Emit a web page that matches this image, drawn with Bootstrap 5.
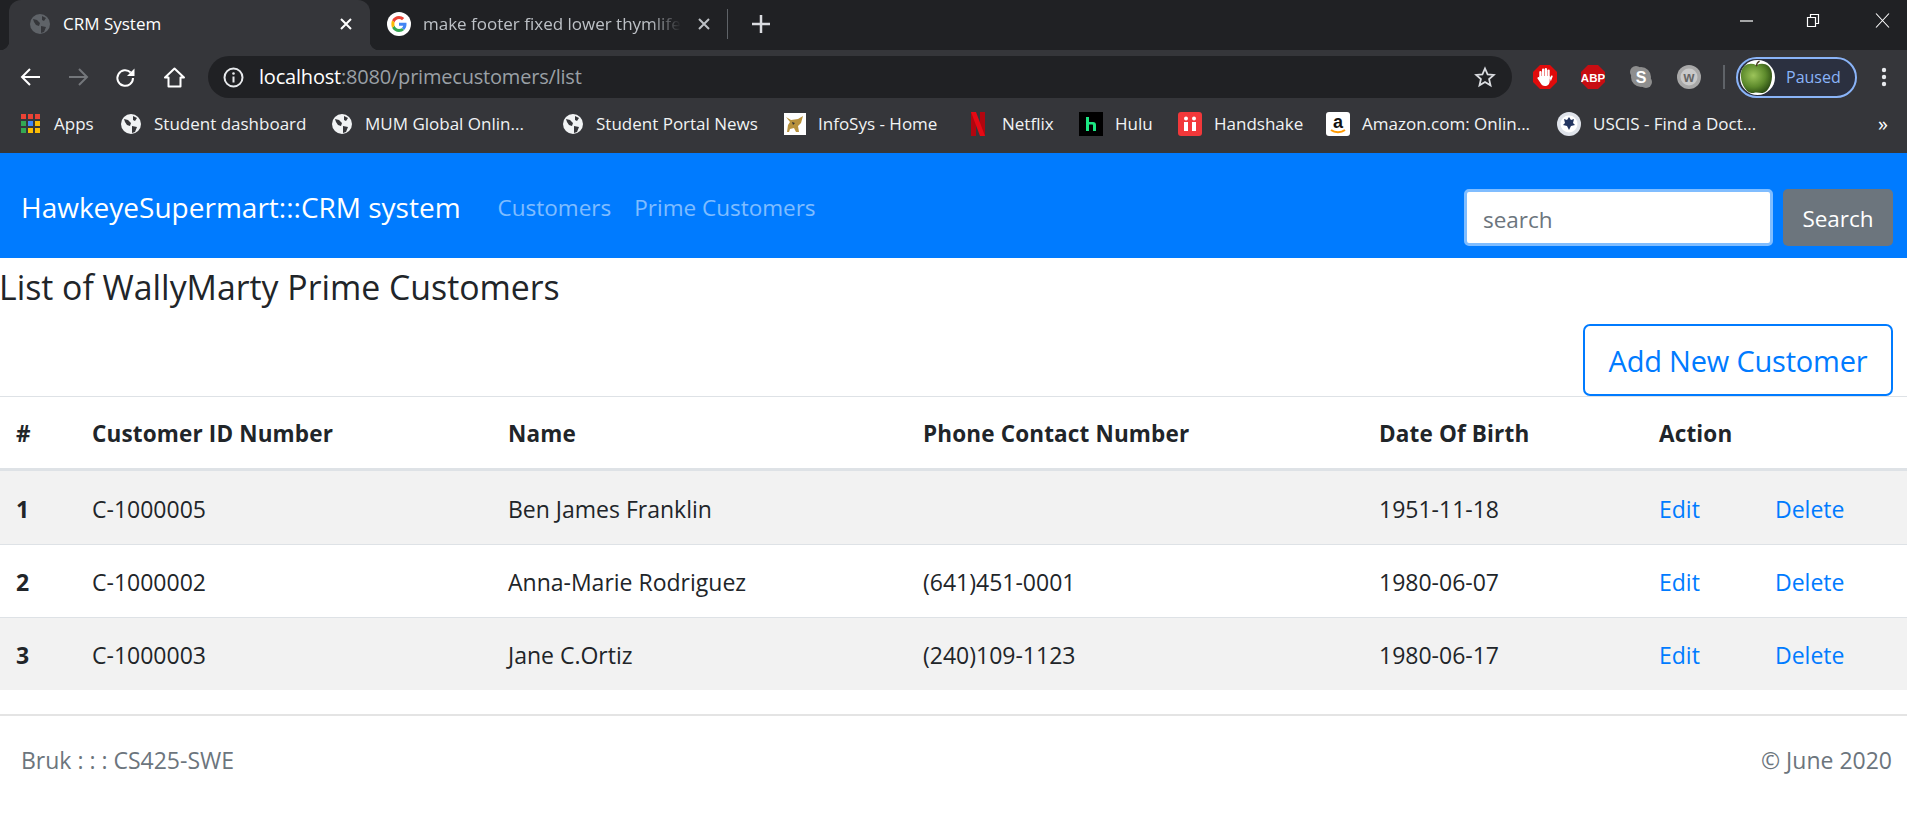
<!DOCTYPE html>
<html lang="en">
<head>
  <meta charset="UTF-8" />
  <title>CRM System</title>
  <link href="https://cdn.jsdelivr.net/npm/bootstrap@5.3.0/dist/css/bootstrap.min.css" rel="stylesheet"/>
  <style>
    html, body { height: 813px; overflow: hidden; }
    body { font-family: "Open Sans", "Liberation Sans", sans-serif; background: #fff; color: #212529; }

    /* browser chrome */
    .chrome { background: #35363a; height: 153px; color: #e8eaed; font-size: 17px; }
    .tabstrip { height: 50px; background: #202124; padding-left: 9px; }
    .tab-item { height: 50px; display: flex; align-items: center; position: relative; padding-bottom: 2px; }
    .tab-on { width: 361px; background: #35363a; border-radius: 12px 12px 0 0; color: #fff; padding-left: 20px; }
    .tab-on::before, .tab-on::after { content: ""; position: absolute; bottom: 0; width: 9px; height: 9px; }
    .tab-on::before { left: -9px; background: radial-gradient(circle at 0 0, #202124 9px, #35363a 9.5px); }
    .tab-on::after { right: -9px; background: radial-gradient(circle at 100% 0, #202124 9px, #35363a 9.5px); }
    .tab-off { width: 357px; color: #bdc1c6; padding-left: 17px; }
    .tab-title { margin-left: 12px; white-space: nowrap; overflow: hidden; width: 270px; }
    .tab-off .tab-title { width: 258px; margin-left: 12px; -webkit-mask-image: linear-gradient(to right, #000 88%, transparent); mask-image: linear-gradient(to right, #000 88%, transparent); }
    .tab-x { margin-left: auto; margin-right: 17px; display: flex; }
    .tab-off .tab-x { margin-right: 16px; }
    .tab-sep { width: 1px; height: 30px; background: #5f6368; }
    .tab-plus { margin-left: 23px; display: flex; }
    .win-ctrl { margin-left: auto; display: grid; grid-template-columns: 67px 69px 32px; align-items: center; justify-items: start; height: 40px; }

    .toolbar { height: 54px; display: grid; grid-template-columns: 48px 47px 49px 44px 1304px 21px 48px 48px 48px 46px 13px 121px 1fr; align-items: center; padding-left: 20px; }
    .omni { background: #202124; height: 42px; border-radius: 21px; display: flex; align-items: center; padding: 0 16px 0 15px; font-size: 20px; color: #9aa0a6; letter-spacing: -0.2px; }
    .omni b { font-weight: 400; color: #fff; }
    .omni-url { margin-left: 15px; }
    .omni-star { margin-left: auto; display: flex; }
    .tool-sep { width: 2px; height: 24px; background: #5f6368; }
    .profile-pill { height: 41px; width: 121px; border: 2px solid #8ab4f8; border-radius: 21px; background: #2b3040; display: flex; align-items: center; padding-left: 2px; color: #8ab4f8; font-size: 16px; }
    .profile-pill span { margin-left: 11px; }
    .tool-dots { margin-left: 24px; display: flex; }

    .bookmarks { height: 49px; display: grid; grid-template-columns: 100px 211px 231px 222px 186px 109px 99px 148px 231px 1fr 18px; align-items: center; padding: 0 11px 9px 20px; }
    .bm-item { display: flex; align-items: center; gap: 12px; white-space: nowrap; color: #f1f3f4; }
    .bm-item svg { flex: none; }
    .bm-netflix { margin-right: 4px; }

    /* page */
    .crm-nav { height: 105px; background: #007bff; padding: 0 14px 0 21px; }
    .crm-brand { font-size: 28px; color: #fff; margin-top: 3px; }
    .crm-link { font-size: 22.5px; color: rgba(255,255,255,.5); text-decoration: none; margin-top: 5px; }
    .crm-links { margin-left: 37px; gap: 23px; }
    .crm-search { gap: 10px; margin-top: 24px; }
    .crm-input { width: 309px; height: 57px; font-size: 22.5px; border: 3px solid #80bdff; border-radius: 5px; padding: 3px 16px 0; }
    .crm-input::placeholder { color: #6c757d; }
    .crm-submit { width: 110px; height: 57px; font-size: 22.5px; background: #6c757d; color: #fff; border: 0; border-radius: 5px; padding: 2px 0 0; }

    .page-title { font-size: 33.8px; font-weight: 400; line-height: 59px; height: 60px; margin: 0 0 0 -1px; }
    .add-row { height: 78px; padding: 6px 14px 0 0; }
    .add-btn { width: 310px; height: 72px; font-size: 29px; color: #007bff; border: 2px solid #007bff; border-radius: 7px; display: flex; align-items: center; justify-content: center; text-decoration: none; letter-spacing: -0.2px; background: #fff; position: relative; padding-top: 1px; }

    .crm-table { width: 1907px; table-layout: fixed; margin: 0; border-collapse: separate; border-spacing: 0; --bs-table-striped-bg: #f2f2f2; --bs-table-border-color: #dee2e6; font-size: 23px; }
    .crm-table th, .crm-table td { padding: 3px 0 0 17px; vertical-align: middle; border: 0; }
    .crm-table th:first-child { padding-left: 16px; }
    .crm-table thead tr { height: 75px; }
    .crm-table thead th { border-top: 1px solid #dee2e6; border-bottom: 3px solid #dee2e6; font-size: 22.5px; letter-spacing: .15px; font-weight: 700; }
    .crm-table tbody tr { height: 73px; }
    .crm-table tbody tr + tr td, .crm-table tbody tr + tr th { border-top: 1px solid #dee2e6; }
    .crm-table a { color: #007bff; text-decoration: none; }
    .col-n { width: 75px; }
    .col-id { width: 416px; }
    .col-name { width: 415px; }
    .col-phone { width: 456px; }
    .col-dob { width: 280px; }
    .col-edit { width: 116px; }

    .crm-foot { margin-top: 24px; border-top: 2px solid #e4e4e4; height: 99px; padding: 0 15px 9px 21px; color: #6c757d; font-size: 23px; }
  </style>
</head>
<body>

  <!-- Browser chrome -->
  <div class="chrome">
    <div class="tabstrip d-flex">
      <div class="tab-item tab-on">
        <svg width="22" height="22" viewBox="0 0 22 22"><circle cx="11" cy="11" r="10" fill="#5f6368"/><path d="M4 6l4 1 3 3-1 3-3-1-2-3zM13 3l4 2-2 3-2-1zM12 13l5 1-2 5-3 1z" fill="#35363a"/></svg>
        <span class="tab-title">CRM System</span>
        <span class="tab-x"><svg width="14" height="14" viewBox="0 0 14 14"><path d="M2 2l10 10M12 2L2 12" stroke="#fff" stroke-width="2"/></svg></span>
      </div>
      <div class="tab-item tab-off">
        <svg width="24" height="24" viewBox="0 0 24 24"><circle cx="12" cy="12" r="12" fill="#fff"/><path d="M19.500 12.300c0-.6 0-1.100-.1-1.600H12v3h4.200c-.2 1-.7 1.800-1.500 2.400l2.400 1.900c1.500-1.300 2.400-3.300 2.400-5.700z" fill="#4285f4"/><path d="M12 20c2.100 0 3.900-.7 5.100-1.900l-2.400-1.900c-.7.500-1.600.8-2.700.8-2.100 0-3.800-1.400-4.400-3.200l-2.500 1.900C6.400 18.300 9 20 12 20z" fill="#34a853"/><path d="M7.600 13.800c-.3-1.100-.3-2.400 0-3.600L5.100 8.300c-1 2.200-1 5.200 0 7.400z" fill="#fbbc05"/><path d="M12 7c1.200 0 2.200.4 3 1.200l2.200-2.200C15.800 4.700 14 4 12 4 9 4 6.400 5.700 5.100 8.300l2.500 1.900C8.200 8.400 9.900 7 12 7z" fill="#ea4335"/></svg>
        <span class="tab-title">make footer fixed lower thymlife</span>
        <span class="tab-x"><svg width="14" height="14" viewBox="0 0 14 14"><path d="M2 2l10 10M12 2L2 12" stroke="#bdc1c6" stroke-width="2"/></svg></span>
      </div>
      <div class="tab-item"><span class="tab-sep"></span></div>
      <div class="tab-item tab-plus"><svg width="20" height="20" viewBox="0 0 20 20"><path d="M10 1v18M1 10h18" stroke="#dadce0" stroke-width="2.500"/></svg></div>
      <div class="win-ctrl">
        <svg width="15" height="15" viewBox="0 0 15 15"><path d="M1 8h13" stroke="#fff" stroke-width="1.200"/></svg>
        <svg width="15" height="15" viewBox="0 0 15 15"><path d="M1.500 4.500h8v9h-8zM4.500 4.500v-3h8v9h-3" fill="none" stroke="#fff" stroke-width="1.200"/></svg>
        <svg width="15" height="15" viewBox="0 0 15 15"><path d="M1 0.500l13 14M14 0.500l-13 14" stroke="#fff" stroke-width="1.100"/></svg>
      </div>
    </div>

    <div class="toolbar">
      <svg width="21" height="20" viewBox="0 0 21 20"><path d="M20 10H2M10 2l-8 8 8 8" fill="none" stroke="#fff" stroke-width="2"/></svg>
      <svg width="21" height="20" viewBox="0 0 21 20"><path d="M1 10h18M11 2l8 8-8 8" fill="none" stroke="#74777b" stroke-width="2"/></svg>
      <svg width="21" height="21" viewBox="0 0 21 21"><path d="M18 11a7.800 7.800 0 1 1-2.300-5.500" fill="none" stroke="#fff" stroke-width="2"/><path d="M19.500 1.500v7.500H12z" fill="#fff"/></svg>
      <svg width="21" height="21" viewBox="0 0 21 21"><path d="M10.500 1.500L1 10.500h3.500v9h12v-9H20z" fill="none" stroke="#fff" stroke-width="2" stroke-linejoin="round"/></svg>
      <div class="omni">
        <svg width="21" height="21" viewBox="0 0 21 21"><circle cx="10.500" cy="10.500" r="9" fill="none" stroke="#e8eaed" stroke-width="2"/><path d="M10.500 9.500v6" stroke="#e8eaed" stroke-width="2"/><circle cx="10.500" cy="6.500" r="1.300" fill="#e8eaed"/></svg>
        <span class="omni-url"><b>localhost</b>:8080/primecustomers/list</span>
        <span class="omni-star"><svg width="22" height="22" viewBox="0 0 22 22"><path d="M11 2.500l2.600 5.800 6.200.6-4.700 4.200 1.400 6.200L11 16l-5.500 3.300 1.400-6.200-4.700-4.200 6.200-.6z" fill="none" stroke="#dadce0" stroke-width="1.800"/></svg></span>
      </div>
      <span></span>
      <svg width="24" height="24" viewBox="0 0 24 24"><path d="M7 0h10l7 7v10l-7 7H7l-7-7V7z" fill="#e00b0b"/><g fill="#fff"><rect x="6.300" y="6" width="2.300" height="9" rx="1.100"/><rect x="9" y="3.500" width="2.300" height="11" rx="1.100"/><rect x="11.700" y="3" width="2.300" height="11" rx="1.100"/><rect x="14.400" y="4.500" width="2.300" height="10" rx="1.100"/><path d="M6.300 11h10.400v5c0 3-2 5-4.700 5-2.300 0-3.500-1.200-4.500-3l-3-4.500c-.6-1 1-2.200 2-1.200l1 1z"/><path d="M16.700 13l1.300-2c.6-.9 2-.2 1.600.8l-1.800 4.700z"/></g></svg>
      <svg width="24" height="24" viewBox="0 0 24 24"><path d="M7 0h10l7 7v10l-7 7H7l-7-7V7z" fill="#c70d12"/><text x="12" y="16.500" text-anchor="middle" font-family="Liberation Sans, sans-serif" font-weight="700" font-size="11.500" fill="#fff">ABP</text></svg>
      <svg width="24" height="24" viewBox="0 0 24 24"><circle cx="7" cy="7" r="6" fill="#8e8e8e"/><circle cx="17" cy="17" r="6" fill="#8e8e8e"/><circle cx="12" cy="12" r="10" fill="#8e8e8e"/><text x="12" y="17.500" text-anchor="middle" font-family="Liberation Sans, sans-serif" font-weight="700" font-size="16" fill="#fff">S</text></svg>
      <svg width="24" height="24" viewBox="0 0 24 24"><circle cx="12" cy="12" r="12" fill="#a8a8a8"/><circle cx="12" cy="12" r="8.500" fill="#c9c9c9"/><text x="12" y="17" text-anchor="middle" font-family="Liberation Sans, sans-serif" font-weight="700" font-size="14" fill="#666">w</text></svg>
      <span class="tool-sep"></span>
      <div class="profile-pill">
        <svg width="35" height="35" viewBox="0 0 34 34"><defs><radialGradient id="apl" cx="40%" cy="40%" r="65%"><stop offset="0" stop-color="#9cc45a"/><stop offset="0.600" stop-color="#5d8a2c"/><stop offset="1" stop-color="#2c4d14"/></radialGradient></defs><circle cx="17" cy="17" r="17" fill="#fff"/><path d="M16 5c6-3 14-1 15 8 .8 8-3 18-9 19-2 .4-4-.5-6-.5s-3 .9-5 .5C5 31 0 21 1 13 2 4 10 2 16 5z" fill="url(#apl)"/><path d="M16 6c0-2 1-4 3-5" stroke="#4a3a20" stroke-width="1.300" fill="none"/></svg>
        <span>Paused</span>
      </div>
      <span class="tool-dots"><svg width="6" height="22" viewBox="0 0 6 22"><circle cx="3" cy="4" r="2.200" fill="#e8eaed"/><circle cx="3" cy="11" r="2.200" fill="#e8eaed"/><circle cx="3" cy="18" r="2.200" fill="#e8eaed"/></svg></span>
    </div>

    <div class="bookmarks">
      <div class="bm-item">
        <svg width="22" height="22" viewBox="0 0 22 22"><g fill="#ea4335"><rect x="1" y="1" width="5" height="5"/><rect x="8" y="1" width="5" height="5"/><rect x="15" y="1" width="5" height="5"/></g><rect x="1" y="8" width="5" height="5" fill="#34a853"/><rect x="8" y="8" width="5" height="5" fill="#4285f4"/><rect x="15" y="8" width="5" height="5" fill="#fbbc05"/><rect x="1" y="15" width="5" height="5" fill="#34a853"/><rect x="8" y="15" width="5" height="5" fill="#fbbc05"/><rect x="15" y="15" width="5" height="5" fill="#fbbc05"/></svg>
        <span>Apps</span>
      </div>
      <div class="bm-item">
        <svg width="22" height="22" viewBox="0 0 22 22"><circle cx="11" cy="11" r="10" fill="#f1f3f4"/><path d="M4 6l4 1 3 3-1 3-3-1-2-3zM13 3l4 2-2 3-2-1zM12 13l5 1-2 5-3 1z" fill="#35363a"/></svg>
        <span>Student dashboard</span>
      </div>
      <div class="bm-item">
        <svg width="22" height="22" viewBox="0 0 22 22"><circle cx="11" cy="11" r="10" fill="#f1f3f4"/><path d="M4 6l4 1 3 3-1 3-3-1-2-3zM13 3l4 2-2 3-2-1zM12 13l5 1-2 5-3 1z" fill="#35363a"/></svg>
        <span>MUM Global Onlin...</span>
      </div>
      <div class="bm-item">
        <svg width="22" height="22" viewBox="0 0 22 22"><circle cx="11" cy="11" r="10" fill="#f1f3f4"/><path d="M4 6l4 1 3 3-1 3-3-1-2-3zM13 3l4 2-2 3-2-1zM12 13l5 1-2 5-3 1z" fill="#35363a"/></svg>
        <span>Student Portal News</span>
      </div>
      <div class="bm-item">
        <svg width="22" height="22" viewBox="0 0 22 22"><rect width="22" height="22" fill="#fff"/><path d="M2 4l5 3 7-1 5-3-2 7-3 3 1 6h-3l-2-4-4 1-1 3H3l1-7 2-3z" fill="#b8923c"/><path d="M8 9l3 1-2 2z" fill="#333"/></svg>
        <span>InfoSys - Home</span>
      </div>
      <div class="bm-item">
        <svg class="bm-netflix" width="16" height="24" viewBox="0 0 16 24"><path d="M1 0h5v24H1z" fill="#b1060f"/><path d="M10 0h5v24h-5z" fill="#b1060f"/><path d="M1 0h5l9 24h-5z" fill="#e50914"/></svg>
        <span>Netflix</span>
      </div>
      <div class="bm-item">
        <svg width="24" height="24" viewBox="0 0 24 24"><rect width="24" height="24" fill="#000"/><path d="M7 5h3v5h4c2 0 3 1 3 3v6h-3v-5.500c0-.6-.4-1-1-1h-3V19H7z" fill="#1ce783"/></svg>
        <span>Hulu</span>
      </div>
      <div class="bm-item">
        <svg width="24" height="24" viewBox="0 0 24 24"><rect width="24" height="24" rx="3" fill="#f2383a"/><rect x="6" y="10" width="4" height="9" fill="#fff"/><rect x="14" y="10" width="4" height="9" fill="#fff"/><circle cx="8" cy="6.500" r="2" fill="#fff"/><circle cx="16" cy="6.500" r="2" fill="#fff"/></svg>
        <span>Handshake</span>
      </div>
      <div class="bm-item">
        <svg width="24" height="24" viewBox="0 0 24 24"><rect width="24" height="24" rx="3" fill="#fff"/><text x="12" y="16" text-anchor="middle" font-family="Liberation Sans, sans-serif" font-weight="700" font-size="18" fill="#111">a</text><path d="M5 18c4 3 10 3 14 0" stroke="#f90" stroke-width="2" fill="none"/></svg>
        <span>Amazon.com: Onlin...</span>
      </div>
      <div class="bm-item">
        <svg width="24" height="24" viewBox="0 0 24 24"><circle cx="12" cy="12" r="12" fill="#dfe3ea"/><circle cx="12" cy="12" r="8.500" fill="#fff"/><path d="M12 5l2 3 3-1-1 4 2 2-4 1-2 4-2-4-4-1 2-2-1-4 3 1z" fill="#23355f"/></svg>
        <span>USCIS - Find a Doct...</span>
      </div>
      <span class="fs-5 lh-1 text-white">»</span>
    </div>
  </div>

  <!-- Navbar -->
  <nav class="crm-nav d-flex align-items-center justify-content-between">
    <div class="d-flex align-items-center">
      <span class="crm-brand">HawkeyeSupermart:::CRM system</span>
      <div class="crm-links d-flex">
        <a class="crm-link" href="#">Customers</a>
        <a class="crm-link" href="#">Prime Customers</a>
      </div>
    </div>
    <form class="crm-search d-flex">
      <input class="crm-input" type="text" placeholder="search" />
      <button class="crm-submit" type="button">Search</button>
    </form>
  </nav>

  <h4 class="page-title">List of WallyMarty Prime Customers</h4>

  <div class="add-row d-flex justify-content-end">
    <a class="add-btn" href="#">Add New Customer</a>
  </div>

  <!-- Customers -->
  <table class="table table-striped crm-table">
    <colgroup>
      <col class="col-n"/><col class="col-id"/><col class="col-name"/><col class="col-phone"/><col class="col-dob"/><col class="col-edit"/><col/>
    </colgroup>
    <thead>
      <tr>
        <th>#</th>
        <th>Customer ID Number</th>
        <th>Name</th>
        <th>Phone Contact Number</th>
        <th>Date Of Birth</th>
        <th colspan="2">Action</th>
      </tr>
    </thead>
    <tbody>
      <tr>
        <th>1</th><td>C-1000005</td><td>Ben James Franklin</td><td></td><td>1951-11-18</td>
        <td><a href="#">Edit</a></td><td><a href="#">Delete</a></td>
      </tr>
      <tr>
        <th>2</th><td>C-1000002</td><td>Anna-Marie Rodriguez</td><td>(641)451-0001</td><td>1980-06-07</td>
        <td><a href="#">Edit</a></td><td><a href="#">Delete</a></td>
      </tr>
      <tr>
        <th>3</th><td>C-1000003</td><td>Jane C.Ortiz</td><td>(240)109-1123</td><td>1980-06-17</td>
        <td><a href="#">Edit</a></td><td><a href="#">Delete</a></td>
      </tr>
    </tbody>
  </table>

  <!-- Footer -->
  <footer class="crm-foot d-flex align-items-center justify-content-between">
    <span>Bruk : : : CS425-SWE</span>
    <span>© June 2020</span>
  </footer>

  <script src="https://cdn.jsdelivr.net/npm/bootstrap@5.3.0/dist/js/bootstrap.bundle.min.js"></script>
</body>
</html>
